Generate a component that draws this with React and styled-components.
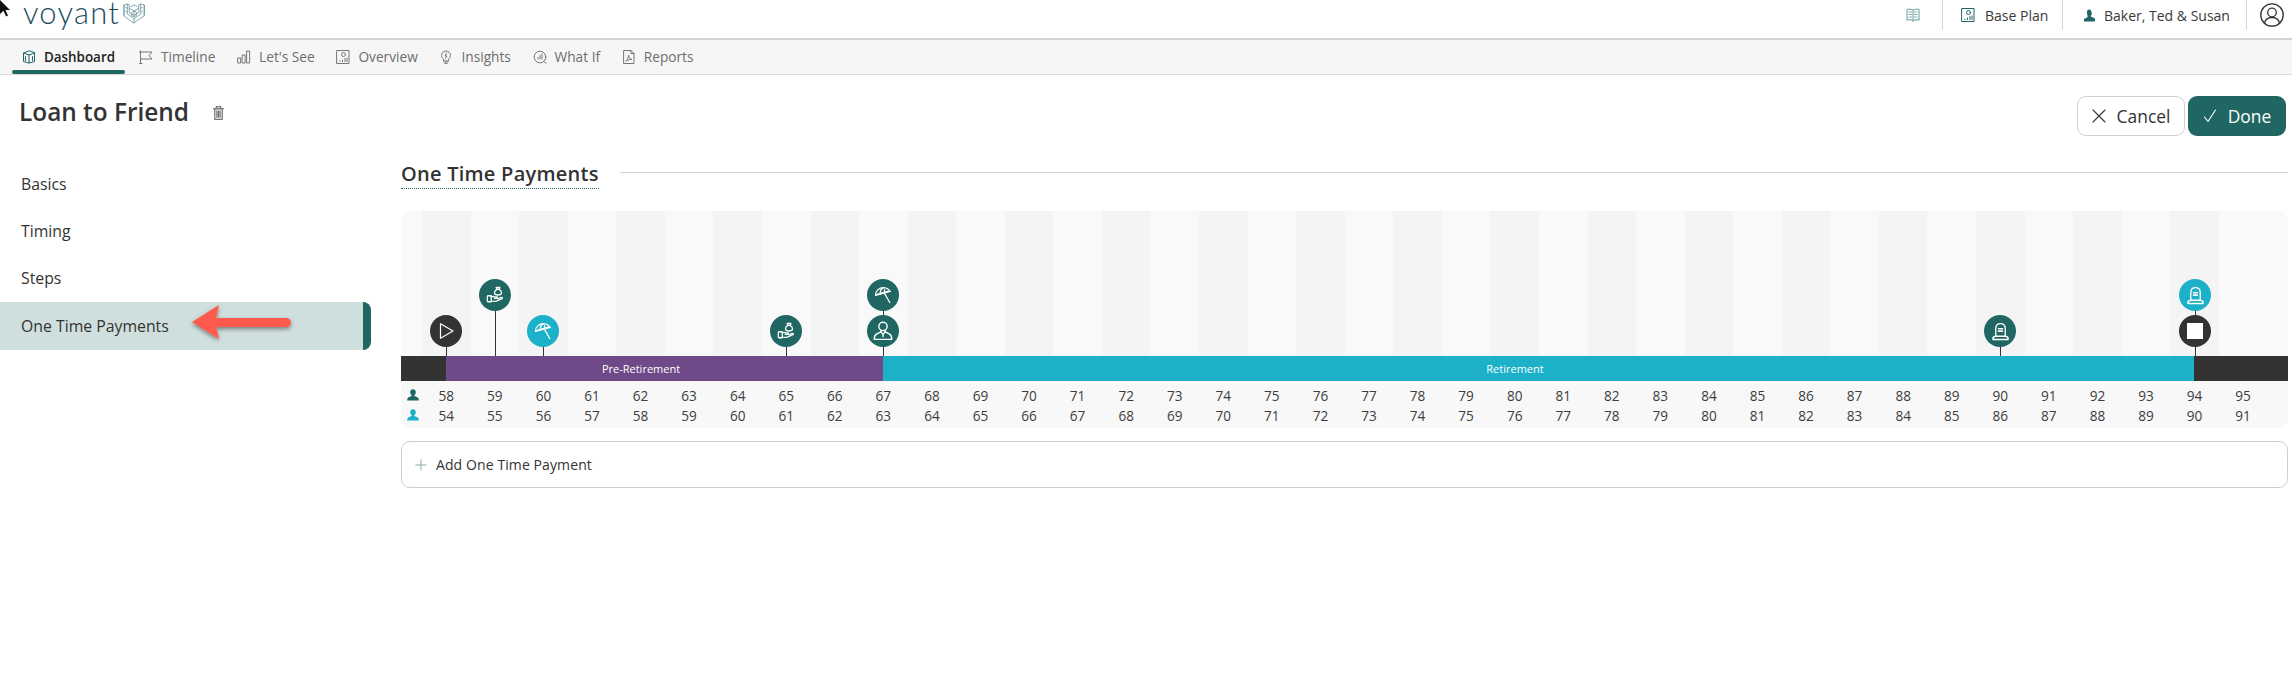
import React from "react";
import styled, { createGlobalStyle } from "styled-components";

const TEAL = "#206764";
const CYAN = "#1cb0c9";
const DARK = "#333333";
const PURPLE = "#6e4a89";
const COL = 48.57;

const Global = createGlobalStyle`
  html, body { margin: 0; padding: 0; background: #fff; }
  body { font-family: "Open Sans", "Liberation Sans", sans-serif; color: #333; width: 2292px; height: 695px; overflow: hidden; }
  * { box-sizing: border-box; }
`;

const Page = styled.div`position: relative; width: 2292px; height: 695px;`;
const Cursor = styled.svg`position: absolute; left: 0; top: 0;`;

const TopBar = styled.header`
  height: 40px; display: flex; align-items: flex-start; justify-content: space-between;
  border-bottom: 2px solid #d4d4d4; padding-left: 23px;
`;
const Brand = styled.div`display: flex; align-items: flex-start; gap: 3px;`;
const BrandName = styled.span`
  font-family: "Lato", sans-serif; font-weight: 300; font-size: 31px; line-height: 25px; padding: 0 0 8px;
  color: #1c4d5e; letter-spacing: 1.2px;
`;
const BrandMark = styled.svg`margin-top: 3px;`;
const TopRight = styled.div`display: flex; align-items: flex-start; height: 30px;`;
const TopCell = styled.div`
  height: 30px; width: ${(p) => p.$w}px; display: flex; align-items: center; gap: ${(p) => p.$gap}px; padding-left: ${(p) => p.$pl}px;
  font-size: 14px; font-weight: 500; color: #3a3a3a;
  border-right: 1.5px solid #d4d4d4;
`;
const AvatarCell = styled.div`width: 45px; display: flex; justify-content: center; height: 30px; align-items: center; padding-left: 4px;`;

const Nav = styled.nav`
  height: 35px; background: #f6f6f6; border-bottom: 1.5px solid #d8d8d8;
  display: flex; padding-left: 12px;
`;
const NavItem = styled.a`
  position: relative; display: flex; align-items: center; gap: 8px; height: 33.5px;
  padding: 0 ${(p) => (p.$active ? 10 : 0)}px 0 10px; margin-right: ${(p) => (p.$active ? 4 : 11.7)}px;
  font-size: ${(p) => (p.$active ? 13.4 : 13.7)}px; font-weight: ${(p) => (p.$active ? 600 : 400)};
  color: ${(p) => (p.$active ? "#222" : "#6d6d6d")};
  &::after {
    content: ""; display: ${(p) => (p.$active ? "block" : "none")};
    position: absolute; left: 0; right: 0; bottom: 0; height: 4px; background: ${TEAL}; border-radius: 2px;
  }
`;

const HeadRow = styled.div`display: flex; justify-content: space-between; align-items: flex-start; padding: 21px 6px 0 19px; height: 85px;`;
const TitleWrap = styled.div`display: flex; align-items: center; gap: 22px; height: 32px;`;
const Title = styled.h1`margin: 0; font-size: 24.4px; line-height: 32px; font-weight: 600; color: #333;`;
const Buttons = styled.div`display: flex; gap: 3px;`;
const Btn = styled.button`
  height: 40px; width: ${(p) => p.$w}px; border-radius: 9px; font: 400 17.4px "Open Sans", sans-serif;
  display: flex; align-items: center; justify-content: center; gap: 11px; padding: 0;
  border: ${(p) => (p.$primary ? "none" : "1px solid #d0d0d0")};
  background: ${(p) => (p.$primary ? TEAL : "#fff")};
  color: ${(p) => (p.$primary ? "#fff" : "#333")};
`;

const Body = styled.div`display: flex;`;
const Side = styled.aside`width: 371px; flex: none; padding-top: 0;`;
const SideItem = styled.div`
  height: 47.4px; display: flex; align-items: center; padding-left: 21px;
  font-size: 15.8px; color: #333; border-radius: 0 8px 8px 0;
  background: ${(p) => (p.$active ? "#cfdfde" : "transparent")};
  border-right: ${(p) => (p.$active ? `8px solid ${TEAL}` : "none")};
`;
const Main = styled.main`flex: 1; padding: 0 4px 0 30px;`;
const SectionHead = styled.div`display: flex; align-items: flex-start; gap: 21px; height: 51px;`;
const SectionTitle = styled.h2`
  margin: 0; font-size: 20px; line-height: 28px; font-weight: 600; color: #333; letter-spacing: 0.25px;
  border-bottom: 1px dotted ${TEAL};
`;
const SectionRule = styled.div`flex: 1; height: 1px; background: #cfcfcf; margin-top: 12px;`;

const Card = styled.section`border-radius: 9px; overflow: hidden; background: #f8f8f8;`;
const Canvas = styled.div`position: relative; height: 145px; display: flex; padding-left: 21px; background: #f9f9f9;`;
const Band = styled.div`width: ${COL}px; flex: none; background: ${(p) => (p.$dark ? "#f4f4f4" : "#f9f9f9")};`;
const Marker = styled.div`position: absolute; bottom: 0; width: 32px; margin-left: -16px; height: ${(p) => (p.$high ? 77 : 41)}px;`;
const Stem = styled.div`position: absolute; left: 15.5px; top: 20px; bottom: 0; width: 1.4px; background: #333;`;
const Dot = styled.div`
  position: absolute; left: 0; top: 0; width: 32px; height: 32px; border-radius: 50%;
  display: flex; align-items: center; justify-content: center; background: ${(p) => p.$c};
`;
const Bar = styled.div`display: flex; height: 25px;`;
const Seg = styled.div`
  width: ${(p) => p.$w}px; flex: ${(p) => (p.$fill ? 1 : "none")}; background: ${(p) => p.$c}; color: #fff;
  font-size: 11px; font-weight: 500; display: flex; align-items: center; justify-content: center;
  padding-right: ${(p) => (p.$label ? 47 : 0)}px;
`;
const Ages = styled.div`padding: 4px 0 3px; height: 47px;`;
const AgeRow = styled.div`display: flex; height: 20px; align-items: center;`;
const AgeIcon = styled.div`width: 21px; flex: none; display: flex; justify-content: center; padding-left: 2px;`;
const Age = styled.div`width: ${COL}px; flex: none; text-align: center; font-size: 13.6px; color: #3d3d3d;`;

const AddRow = styled.button`
  margin-top: 13px; width: 100%; height: 47px; border: 1px solid #cfcfcf; border-radius: 9px; background: #fff;
  display: flex; align-items: center; gap: 9px; padding: 0 0 0 13px;
  font: 500 14px "Open Sans", sans-serif; color: #333; letter-spacing: 0.1px;
`;
const Arrow = styled.svg`position: absolute; left: 185px; top: 298px; overflow: visible;`;

const s = { fill: "none", stroke: "currentColor", strokeLinecap: "round", strokeLinejoin: "round" };

const Glyph = ({ size = 14, color = "#777", sw = 1, children }) => (
  <svg width={size} height={size} viewBox="0 0 14 14" style={{ color, flex: "none" }} {...s} strokeWidth={sw}>{children}</svg>
);

const IcBox = () => <Glyph color={TEAL}><path d="M7 1 1.500 3v8.500L7 13l5.500-1.500V3zM1.500 3 7 5l5.500-2M7 5v8M3.500 6.500v4M10.500 6.500v4" /></Glyph>;
const IcFlag = () => <Glyph><path d="M1.500 1v12.500M0.500 2H13l-3 3.500 3 3.500H1.500M0.500 13.500h2.500" /></Glyph>;
const IcBars = () => <Glyph><rect x="1" y="8" width="2.600" height="5" /><rect x="5.500" y="5" width="2.600" height="8" /><rect x="10" y="1" width="2.600" height="12" /></Glyph>;
const IcOverview = ({ color = "#777" }) => <Glyph color={color}><rect x="1" y="0.500" width="12" height="13" /><circle cx="7.500" cy="4.500" r="2" /><path d="M4 11.500v-.5M6.500 11.500V10M9 11.500V8.500M11 11.500V8" /></Glyph>;
const IcBulb = () => <Glyph><path d="M4.500 10.500V9C3 8 2.500 6.800 2.500 5.500a4.500 4.500 0 0 1 9 0C11.500 6.800 11 8 9.500 9v1.500zM5 12h4M6 13.500h2M7.500 3 6 6h2l-1.500 2.500" /></Glyph>;
const IcWhatIf = () => <Glyph><circle cx="7" cy="7" r="5.800" /><path d="M5 9V7.500M7 9V5.500M9 9V4M10.500 11.500l2.500 1.500" /></Glyph>;
const IcPdf = () => <Glyph><path d="M2 .5h7l3 3v10H2zM9 .5v3h3M4 11c2-1.500 2.500-4 2.500-6 .5 2.500 1.500 4 3.500 4.500-2-.2-4 .3-6 1.500z" /></Glyph>;
const IcBook = () => <Glyph color="#7fb0ad" size={14} sw={1.200}><path d="M7 2.500C5.500 1 3 1 1 1.500v10.500c2-.5 4.500-.5 6 1 1.500-1.500 4-1.500 6-1V1.500C11 1 8.500 1 7 2.500zM7 2.500V13M3 4h2.500M3 6.500h2.500M3 9h2.500M8.500 4H11M8.500 6.500H11M8.500 9H11" /></Glyph>;

const PersonSolid = ({ color = TEAL, size = 12 }) => (
  <svg width={size} height={size} viewBox="0 0 12 12"><path fill={color} d="M6 0.300c1.700 0 2.800 1.200 2.800 2.900 0 1.400-.6 2.500-1.400 3.100v.8c1.500.5 3.400 1.100 4 2.200.3.600.4 1.300.4 2.200H.2c0-.9.100-1.600.4-2.200.6-1.100 2.500-1.700 4-2.200v-.8C3.800 5.700 3.200 4.600 3.200 3.200 3.200 1.500 4.300.3 6 .3z" /></svg>
);
const CouplePerson = () => (
  <svg width="13" height="13" viewBox="0 0 13 13" style={{ flex: "none" }}><path fill={TEAL} d="M6 .5c1.600 0 2.600 1.200 2.500 2.800L9 5.500l-1.200 1v1l4.200 2v3H1v-2.500l3.500-1.800V6C3.500 4 3.800 .5 6 .5z" /></svg>
);

const Avatar = () => (
  <svg width="24" height="24" viewBox="0 0 24 24" fill="none" stroke="#333" strokeWidth="1.300">
    <circle cx="12" cy="12" r="11.200" />
    <circle cx="12" cy="9.500" r="4.300" />
    <path d="M4.500 20c.8-3.500 3.500-5.500 7.500-5.500s6.700 2 7.500 5.500" />
  </svg>
);

const Mark = () => (
  <BrandMark width="22" height="21" viewBox="0 0 23 21" fill="none" stroke="#5f8f96" strokeWidth="0.800">
    <path d="M1 1.500 4.500 .5l2 1v8l5 3 5-3v-8l2-1 3.500 1V13l-11 7.500L1 13zM4.500 .5v10.500l7 5 7-5V.5M11.500 16v4.500M1 1.500v11M22.500 1.500v11M6.500 5l5 3 5-3M11.500 8v4.500M8 3.500l3.500-2 3.500 2" />
    <path d="m9 9.500 2.500-1.500 2.500 1.500v3l-2.500 1.500L9 12.500zM2.500 4l2 1M20.500 4l-2 1M2.500 8l2 1M20.500 8l-2 1" />
  </BrandMark>
);

const mi = { width: 18, height: 18, viewBox: "0 0 24 24", fill: "none", stroke: "#fff", strokeWidth: 1.700, strokeLinecap: "round", strokeLinejoin: "round" };

const MPlay = () => <svg width="16" height="16" viewBox="0 0 16 16" fill="none" stroke="#fff" strokeWidth="1.200" strokeLinejoin="round"><path d="M2.500 .8v14.400L15 8z" /></svg>;
const MStop = () => <svg width="16" height="16"><rect width="16" height="16" fill="#fff" /></svg>;
const MHand = () => (
  <svg {...mi}>
    <path d="M3 13h4v8H3c-.8 0-1.200-.5-1.200-1v-6c0-.5.4-1 1.200-1z" />
    <path d="M7 14.500c2-.8 3.200-.8 4.500 0h3c1 0 1 2 0 2H11M7 20c2.500.8 5 .8 7.500-.2l7-3c.8-.6 0-2-1.200-1.500l-4.800 1.700" />
    <path d="M13.500 2h5l-1 2.500c2 1 3.200 2.500 3.200 4.500 0 2-1.500 3-4.700 3s-4.700-1-4.700-3c0-2 1.200-3.500 3.200-4.500zM14.500 4.500h3" />
  </svg>
);
const MUmbrella = () => (
  <svg {...mi}>
    <path d="M2 12.500C1.500 7 7 1.800 13.200 2.300c3.800.3 6.600 2.200 8.300 5z" />
    <path d="M7.800 11 9 5.500c.6-1.300 2.200-2.500 4.200-3.200M13.500 9.200l.8-4.500M13.600 9.200 21 22" />
    <path d="M2 12.500c1.200-1.500 3.800-2.300 5.800-1.500M7.800 11c1.500-1.700 3.900-2.500 5.700-1.800M13.500 9.200c2-1.500 5.800-2.500 8-1.900" />
  </svg>
);
const MPerson = () => (
  <svg {...mi} width="20" height="20">
    <circle cx="12" cy="6.500" r="5" />
    <path d="M9.500 11v2L4.500 15.500c-2 1-3 3.500-3 6.500h21c0-3-1-5.500-3-6.500L14.500 13v-2" />
    <path d="M9.500 13l2.500 3 2.500-3M12 16v2.500" />
  </svg>
);
const MGrave = () => (
  <svg {...mi} width="19" height="19">
    <path d="M6 18V8.500C6 4.500 8.500 2 12 2s6 2.500 6 6.500V18" />
    <path d="M9.500 8.500h5M9.500 11.500h5" strokeWidth="2" />
    <path d="M2.500 22v-2c1-2 2.500-2 3.500-2h12c1 0 2.500 0 3.500 2v2z" strokeWidth="1.900" />
  </svg>
);

const markers = [
  { x: 45, c: DARK, I: MPlay },
  { x: 94, c: TEAL, I: MHand, high: true },
  { x: 142, c: CYAN, I: MUmbrella },
  { x: 385, c: TEAL, I: MHand },
  { x: 482, c: TEAL, I: MUmbrella, high: true },
  { x: 482, c: TEAL, I: MPerson },
  { x: 1599, c: TEAL, I: MGrave },
  { x: 1794, c: CYAN, I: MGrave, high: true },
  { x: 1794, c: DARK, I: MStop },
];

const ages1 = Array.from({ length: 38 }, (_, i) => 58 + i);
const ages2 = Array.from({ length: 38 }, (_, i) => 54 + i);
const navs = [
  ["Dashboard", IcBox, true], ["Timeline", IcFlag], ["Let's See", IcBars], ["Overview", IcOverview],
  ["Insights", IcBulb], ["What If", IcWhatIf], ["Reports", IcPdf],
];

export default function App() {
  return (
    <Page>
      <Global />
      <TopBar>
        <Brand>
          <BrandName>voyant</BrandName>
          <Mark />
        </Brand>
        <TopRight>
          <TopCell $w={37} $pl={0} $gap={0}><IcBook /></TopCell>
          <TopCell $w={120} $pl={18} $gap={10}><IcOverview color={TEAL} />Base Plan</TopCell>
          <TopCell $w={184} $pl={20} $gap={8}><CouplePerson />Baker, Ted &amp; Susan</TopCell>
          <AvatarCell><Avatar /></AvatarCell>
        </TopRight>
      </TopBar>
      <Nav>
        {navs.map(([label, Ic, active]) => (
          <NavItem key={label} $active={active}><Ic />{label}</NavItem>
        ))}
      </Nav>
      <HeadRow>
        <TitleWrap>
          <Title>Loan to Friend</Title>
          <Glyph color="#777" size={15} sw={1.200}><path d="M2.500 3.500h9M5 3.500V1.500h4v2M3.500 3.500v10h7v-10M5.500 5.500v6M7 5.500v6M8.500 5.500v6" /></Glyph>
        </TitleWrap>
        <Buttons>
          <Btn $w={108}>
            <Glyph color="#333" size={14} sw={1.100}><path d="M1 1l12 12M13 1 1 13" /></Glyph>Cancel
          </Btn>
          <Btn $primary $w={98}>
            <Glyph color="#fff" size={14} sw={1.100}><path d="M1.500 8 5 12.500 12.500 1" /></Glyph>Done
          </Btn>
        </Buttons>
      </HeadRow>
      <Body>
        <Side>
          <SideItem>Basics</SideItem>
          <SideItem>Timing</SideItem>
          <SideItem>Steps</SideItem>
          <SideItem $active>One Time Payments</SideItem>
        </Side>
        <Main>
          <SectionHead>
            <SectionTitle>One Time Payments</SectionTitle>
            <SectionRule />
          </SectionHead>
          <Card>
            <Canvas>
              {ages1.map((a, i) => <Band key={a} $dark={i % 2 === 0} />)}
              {markers.map((m, i) => (
                <Marker key={i} $high={m.high} style={{ left: m.x }}>
                  <Stem />
                  <Dot $c={m.c}><m.I /></Dot>
                </Marker>
              ))}
            </Canvas>
            <Bar>
              <Seg $w={45} $c={DARK} />
              <Seg $w={437} $c={PURPLE} $label>Pre-Retirement</Seg>
              <Seg $w={1311} $c={CYAN} $label>Retirement</Seg>
              <Seg $fill $c={DARK} />
            </Bar>
            <Ages>
              <AgeRow>
                <AgeIcon><PersonSolid color={TEAL} /></AgeIcon>
                {ages1.map((a) => <Age key={a}>{a}</Age>)}
              </AgeRow>
              <AgeRow>
                <AgeIcon><PersonSolid color={CYAN} /></AgeIcon>
                {ages2.map((a) => <Age key={a}>{a}</Age>)}
              </AgeRow>
            </Ages>
          </Card>
          <AddRow>
            <Glyph color="#7fa9a6" size={12} sw={1.100}><path d="M7 1v12M1 7h12" /></Glyph>
            Add One Time Payment
          </AddRow>
        </Main>
      </Body>
      <Arrow width="110" height="50" viewBox="0 0 110 50">
        <defs>
          <filter id="arrowShadow" x="-20%" y="-30%" width="140%" height="180%">
            <feDropShadow dx="0" dy="2" stdDeviation="2" floodColor="#000" floodOpacity="0.45" />
          </filter>
        </defs>
        <path filter="url(#arrowShadow)" fill="#ff5a4b" d="M7 24 34 7l-3 13h71c5 0 5 9 0 9H31l3 12z" />
      </Arrow>
      <Cursor width="11" height="18" viewBox="0 0 11 18"><path d="M0 0v14l3.500-3.300 2.500 5.800 2-1-2.500-5.500H10z" fill="#111" /></Cursor>
    </Page>
  );
}
